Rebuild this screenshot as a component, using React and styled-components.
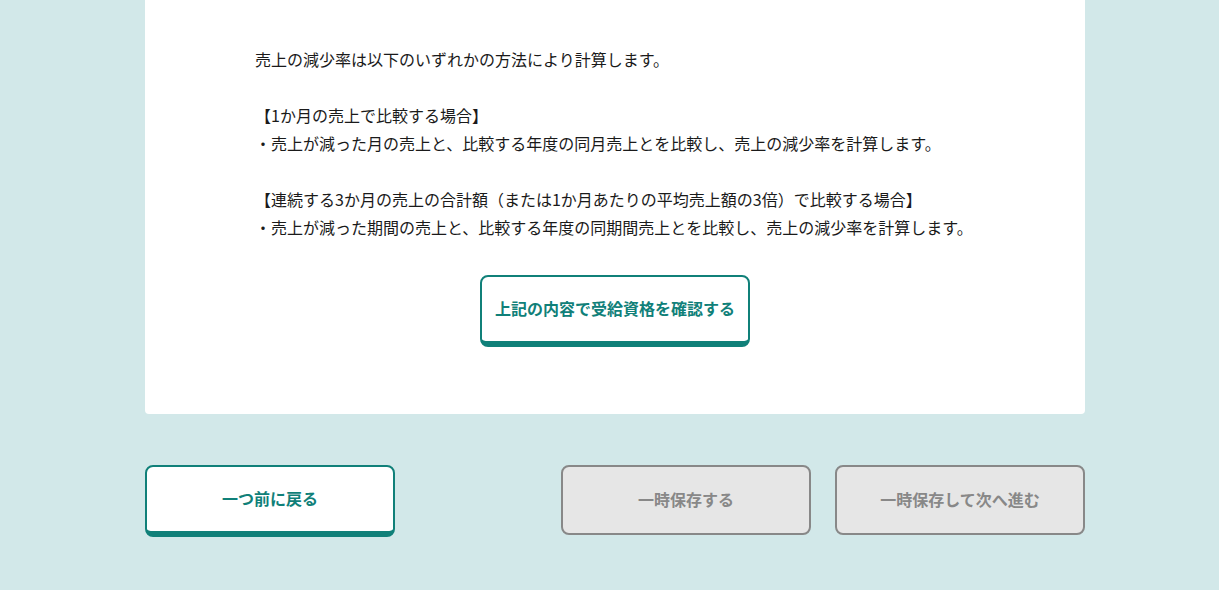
import React from 'react';
import styled, { createGlobalStyle } from 'styled-components';

const GlobalStyle = createGlobalStyle`
  html, body {
    margin: 0;
    padding: 0;
    background-color: #d2e8e9;
  }
  body {
    font-family: "Noto Sans CJK JP", "Noto Sans", sans-serif;
    color: #222222;
  }
`;

const App = () => {
    return (
        <Page>
            <GlobalStyle />
            <Card>
                <Body>
                    <Paragraph>売上の減少率は以下のいずれかの方法により計算します。</Paragraph>
                    <Paragraph>
                        【1か月の売上で比較する場合】<br />
                        ・売上が減った月の売上と、比較する年度の同月売上とを比較し、売上の減少率を計算します。
                    </Paragraph>
                    <Paragraph>
                        【連続する3か月の売上の合計額（または1か月あたりの平均売上額の3倍）で比較する場合】<br />
                        ・売上が減った期間の売上と、比較する年度の同期間売上とを比較し、売上の減少率を計算します。
                    </Paragraph>
                </Body>
                <CenterRow>
                    <PrimaryButton>上記の内容で受給資格を確認する</PrimaryButton>
                </CenterRow>
            </Card>
            <Footer>
                <PrimaryButton $wide>一つ前に戻る</PrimaryButton>
                <FooterRight>
                    <DisabledButton>一時保存する</DisabledButton>
                    <DisabledButton>一時保存して次へ進む</DisabledButton>
                </FooterRight>
            </Footer>
        </Page>
    );
};

const Page = styled.div`
  width: 940px;
  margin-left: 145px;
  padding-bottom: 53px;
`;

const Card = styled.div`
  background-color: #FFFFFF;
  border-radius: 0 0 4px 4px;
  padding: 45px 110px 67px;
  display: flex;
  flex-direction: column;
  gap: 34px;
`;

const Body = styled.div`
  display: flex;
  flex-direction: column;
  gap: 28px;
`;

const Paragraph = styled.p`
  margin: 0;
  font-size: 16px;
  line-height: 28px;
  color: #1a1a1a;
  white-space: nowrap;
`;

const CenterRow = styled.div`
  display: flex;
  justify-content: center;
`;

const PrimaryButton = styled.button`
  width: ${props => props.$wide ? '250px' : '270px'};
  height: 72px;
  box-sizing: border-box;
  background-color: #FFFFFF;
  border: 2px solid #108079;
  border-bottom-width: 6px;
  border-radius: 8px;
  color: #108079;
  font-family: "Noto Sans CJK JP", sans-serif;
  font-size: 16px;
  font-weight: 700;
  padding: 0 0 2px;
  cursor: pointer;
`;

const DisabledButton = styled.button`
  width: 250px;
  height: 70px;
  box-sizing: border-box;
  background-color: #e6e6e6;
  border: 2px solid #888888;
  border-radius: 8px;
  color: #888888;
  font-family: "Noto Sans CJK JP", sans-serif;
  font-size: 16px;
  font-weight: 700;
  padding: 0 0 3px;
`;

const Footer = styled.div`
  margin-top: 51px;
  display: flex;
  justify-content: space-between;
  align-items: flex-start;
`;

const FooterRight = styled.div`
  display: flex;
  gap: 24px;
`;

export default App;
